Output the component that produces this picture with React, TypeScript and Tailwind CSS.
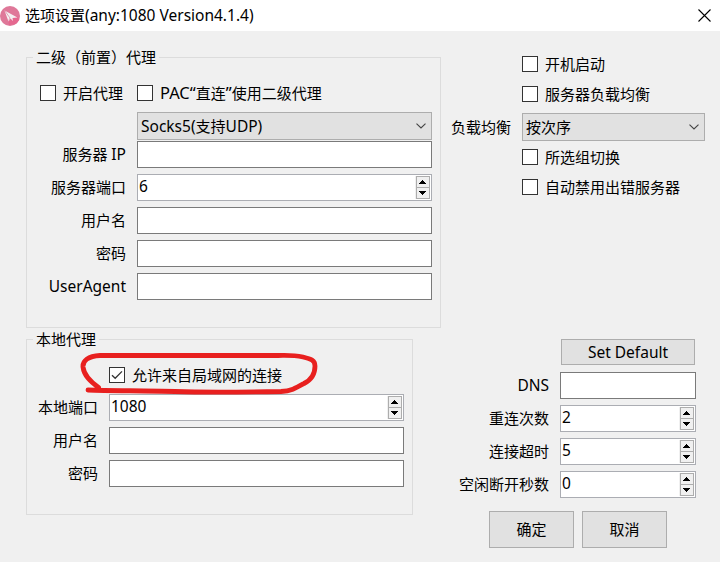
import type { ReactNode } from 'react';

function En({ children }: { children: ReactNode }) {
  return <span className="text-[15.5px] leading-none">{children}</span>;
}

function Check({ label, checked, className = '' }: { label: ReactNode; checked?: boolean; className?: string }) {
  return (
    <label className={`flex h-4 items-center whitespace-nowrap ${className}`}>
      <span className="mr-[7px] flex size-4 shrink-0 items-center justify-center border border-[#333] bg-white">
        {checked && (
          <svg width="14" height="14" viewBox="0 0 14 14" fill="none" stroke="#333" strokeWidth="1.3">
            <path d="M2 7.2 5.2 10.3 12 3.4" />
          </svg>
        )}
      </span>
      <span>{label}</span>
    </label>
  );
}

function Spinner() {
  return (
    <span className="mr-px mt-px flex h-[23px] w-[15px] flex-col bg-[#f0f0f0] pl-px">
      <span className="flex h-3 w-[14px] items-center border border-[#adadad] bg-[#f0f0f0] pl-[2px]">
        <svg width="7" height="4" viewBox="0 0 7 4" shapeRendering="crispEdges">
          <path d="M3 0h1v1h1v1h1v1h1v1H0V3h1V2h1V1h1z" />
        </svg>
      </span>
      <span className="-mt-px flex h-3 w-[14px] items-center border border-[#adadad] bg-[#f0f0f0] pl-[2px]">
        <svg width="7" height="4" viewBox="0 0 7 4" shapeRendering="crispEdges">
          <path d="M0 0h7v1H6v1H5v1H4v1H3V3H2V2H1V1H0z" />
        </svg>
      </span>
    </span>
  );
}

function Field({ label, value, width }: { label: ReactNode; value?: string; width: string }) {
  const spin = value !== undefined;
  return (
    <div className="flex h-[27px] justify-end gap-[11px]">
      <span className="leading-[27px] whitespace-nowrap">{label}</span>
      <div className={`flex h-[27px] shrink-0 justify-between border bg-white ${width} ${spin ? 'border-[#abadb3]' : 'border-[#7a7a7a]'}`}>
        <span className="pl-px text-[15.5px] leading-[22px]">{value}</span>
        {spin && <Spinner />}
      </div>
    </div>
  );
}

function Combo({ children, className }: { children: ReactNode; className: string }) {
  return (
    <div className={`flex h-7 shrink-0 items-center justify-between border border-[#adadad] bg-[#e1e1e1] pr-[5px] pl-[3px] ${className}`}>
      <span>{children}</span>
      <svg width="10" height="6" viewBox="0 0 10 6" fill="none" stroke="#444" strokeWidth="1.1">
        <path d="M.5.6 5 5 9.500.6" />
      </svg>
    </div>
  );
}

function Button({ children, className }: { children: ReactNode; className: string }) {
  return (
    <button className={`flex items-center justify-center border border-[#adadad] bg-[#e1e1e1] pb-px ${className}`}>
      <span>{children}</span>
    </button>
  );
}

function Group({ title, className, children }: { title: string; className: string; children: ReactNode }) {
  return (
    <section className={`relative border border-[#dcdcdc] ${className}`}>
      <h2 className="absolute -top-3 left-[6px] bg-[#f0f0f0] px-[3px] leading-[22px] whitespace-nowrap">{title}</h2>
      {children}
    </section>
  );
}

export default function App() {
  return (
    <div className="relative flex h-[562px] w-[720px] flex-col overflow-hidden bg-[#f0f0f0] font-['Noto_Sans','Noto_Sans_CJK_SC',sans-serif] text-[15px] leading-[22px] text-black">
      <header className="flex h-[31px] shrink-0 items-center bg-white pr-[9px]">
        <svg width="20" height="20" viewBox="0 0 20 20">
          <circle cx="10" cy="10" r="10" fill="#df7899" />
          <path d="M6 6 18 11 19 14 16 18 9 19 8 14z" fill="#e5688f" />
          <path d="M4.500 4.500 17.500 11.500 12.500 12 13 15 10.500 12.500 8.500 15.500z" fill="#f3f0f1" />
          <path d="M5 5 10 12 8.700 14.500" fill="none" stroke="#df8ba7" strokeWidth=".8" />
        </svg>
        <h1 className="mb-px ml-[5px] flex-1 whitespace-nowrap">
          选项设置<En>(any:1080 Version4.1.4)</En>
        </h1>
        <svg width="13" height="13" viewBox="0 0 13 13" stroke="#000" strokeWidth="1.1">
          <path d="M.5.5 12.500 12.500M12.500.5.5 12.500" />
        </svg>
      </header>

      <main className="flex flex-1 pl-[26px]">
        <div className="w-[415px] pt-[26px]">
          <Group title="二级（前置）代理" className="h-[271px] w-[415px] pt-[27px] pr-2">
            <div className="flex pl-[13px]">
              <Check label="开启代理" className="w-[97px]" />
              <Check
                label={
                  <>
                    <span className="text-[16.500px] leading-none">PAC“</span>直连<span className="text-[16.500px] leading-none">”</span>使用二级代理
                  </>
                }
              />
            </div>
            <Combo className="mt-[11px] ml-[110px]">
              <En>Socks5(</En>支持<En>UDP)</En>
            </Combo>
            <div className="mt-px flex flex-col gap-[6px]">
              <Field label={<>服务器 <En>IP</En></>} width="w-[295px]" />
              <Field label="服务器端口" value="6" width="w-[295px]" />
              <Field label="用户名" width="w-[295px]" />
              <Field label="密码" width="w-[295px]" />
              <Field label={<En>UserAgent</En>} width="w-[295px]" />
            </div>
          </Group>
          <Group title="本地代理" className="mt-[11px] h-[176px] w-[387px] pt-[27px] pr-2">
            <Check label="允许来自局域网的连接" checked className="ml-[82px]" />
            <div className="mt-[11px] flex flex-col gap-[6px]">
              <Field label="本地端口" value="1080" width="w-[295px]" />
              <Field label="用户名" width="w-[295px]" />
              <Field label="密码" width="w-[295px]" />
            </div>
          </Group>
        </div>

        <div className="flex w-[264px] flex-col pt-[25px]">
          <div className="flex flex-col gap-[14px] pl-[81px]">
            <Check label="开机启动" />
            <Check label="服务器负载均衡" />
          </div>
          <div className="mt-[11px] flex items-center justify-end gap-[11px]">
            <span className="pb-px">负载均衡</span>
            <Combo className="w-[183px]">按次序</Combo>
          </div>
          <div className="mt-2 flex flex-col gap-[14px] pl-[81px]">
            <Check label="所选组切换" />
            <Check label="自动禁用出错服务器" />
          </div>
          <div className="mt-36 flex flex-col pr-[9px]">
            <Button className="mr-px h-[26px] w-[134px] self-end">
              <En>Set Default</En>
            </Button>
            <div className="mt-[7px] flex flex-col gap-[6px]">
              <Field label={<En>DNS</En>} width="w-[136px]" />
              <Field label="重连次数" value="2" width="w-[136px]" />
              <Field label="连接超时" value="5" width="w-[136px]" />
              <Field label="空闲断开秒数" value="0" width="w-[136px]" />
            </div>
          </div>
          <div className="mt-[13px] flex gap-2 pl-12">
            <Button className="h-[37px] w-[85px]">确定</Button>
            <Button className="h-[37px] w-[85px]">取消</Button>
          </div>
        </div>
      </main>

      <svg className="pointer-events-none absolute top-[345px] left-[75px]" width="250" height="55" viewBox="75 345 250 55" fill="none" stroke="#e8201f" strokeWidth="4.800" strokeLinecap="round" strokeLinejoin="round">
        <path d="M88 390C110 391 145 390.500 175 391.500C205 392.500 250 392 281 391.500C291 391 296 388 304 383.500C313 379 315 373 315 366C315 360 311 359 303 357C293 355 288 355.500 278 355.500H100C88 356 82.500 361 83 367C84 376 91 382 98.500 387.500" />
      </svg>
    </div>
  );
}
